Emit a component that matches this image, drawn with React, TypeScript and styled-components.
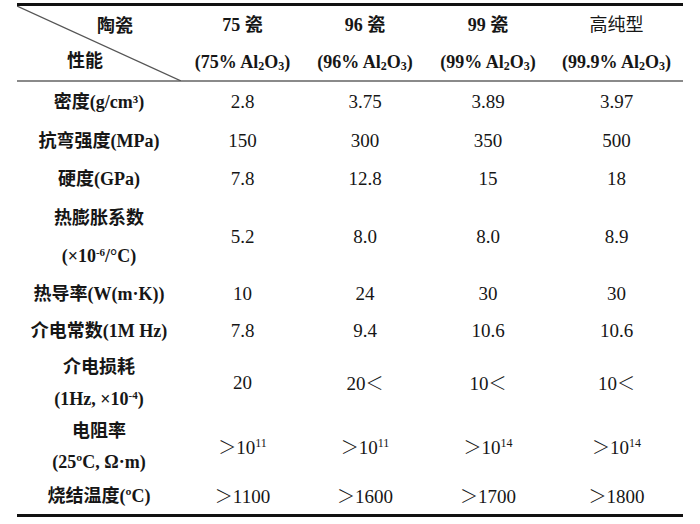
import React from "react";
import styled, { createGlobalStyle } from "styled-components";

const Global = createGlobalStyle`
  html, body { margin: 0; padding: 0; background: #fff; }
  body { font-family: "Liberation Serif", "Noto Sans CJK SC", serif; color: #161616; }
`;

const Page = styled.div`
  padding: 3px 0 0 17px;
  width: 700px;
  box-sizing: border-box;
`;

const Table = styled.table`
  width: 666px;
  border-collapse: collapse;
  table-layout: fixed;
  border-top: 3px solid #111;
  border-bottom: 3px solid #111;
`;

const HeadCell = styled.th<{ $light?: boolean }>`
  height: 37px;
  padding: 0;
  text-align: center;
  vertical-align: middle;
  font-size: 18px;
  line-height: 24px;
  font-weight: ${(p) => (p.$light ? 400 : 700)};
  white-space: nowrap;
  sub { font-size: 12px; vertical-align: -2px; line-height: 0; }
`;

const HeadRow = styled.tr<{ $last?: boolean }>`
  border-bottom: ${(p) => (p.$last ? "2px solid #8a8a8a" : "none")};
`;

const CornerCell = styled.th`
  position: relative;
  padding: 0;
  font-size: 18px;
  font-weight: 700;
  vertical-align: top;
`;

const CornerStack = styled.div`
  display: flex;
  flex-direction: column;
  height: 74px;
`;

const CornerTop = styled.div`
  height: 37px;
  line-height: 40px;
  padding-left: 80px;
  text-align: left;
`;

const CornerBottom = styled.div`
  height: 37px;
  line-height: 36px;
  padding-left: 50px;
  text-align: left;
  font-weight: 600;
`;

const Diagonal = styled.svg`
  position: absolute;
  left: 0;
  top: 0;
  width: 164px;
  height: 75px;
  pointer-events: none;
`;

const LabelCell = styled.td<{ $h: number; $lh: number }>`
  height: ${(p) => p.$h}px;
  padding: 0;
  text-align: center;
  vertical-align: middle;
  font-size: 18px;
  font-weight: 700;
  line-height: ${(p) => p.$lh}px;
  white-space: nowrap;
  sup { font-size: 11px; vertical-align: 6px; line-height: 0; }
`;

const ValueCell = styled.td`
  padding: 0;
  text-align: center;
  vertical-align: middle;
  font-size: 19px;
  line-height: 24px;
  font-weight: 400;
  white-space: nowrap;
  sup { font-size: 12px; vertical-align: 7px; line-height: 0; }
`;

const Gt = styled.span`
  font-family: "Noto Sans CJK SC", sans-serif;
  font-weight: 300;
  font-size: 18px;
`;

type Row = {
  label: React.ReactNode[];
  vals: React.ReactNode[];
  h: number;
  lh: number;
};

const gt = (n: React.ReactNode) => (
  <>
    <Gt>＞</Gt>
    {n}
  </>
);
const lt = (n: string) => (
  <>
    {n}
    <Gt>＜</Gt>
  </>
);
const pow = (b: string, e: string) => (
  <>
    {b}
    <sup>{e}</sup>
  </>
);

const rows: Row[] = [
  { label: ["密度(g/cm³)"], vals: ["2.8", "3.75", "3.89", "3.97"], h: 39, lh: 24 },
  { label: ["抗弯强度(MPa)"], vals: ["150", "300", "350", "500"], h: 39, lh: 24 },
  { label: ["硬度(GPa)"], vals: ["7.8", "12.8", "15", "18"], h: 38, lh: 24 },
  {
    label: ["热膨胀系数", <>(×10<sup>-6</sup>/°C)</>],
    vals: ["5.2", "8.0", "8.0", "8.9"],
    h: 77,
    lh: 38,
  },
  { label: ["热导率(W(m·K))"], vals: ["10", "24", "30", "30"], h: 37, lh: 24 },
  { label: ["介电常数(1M Hz)"], vals: ["7.8", "9.4", "10.6", "10.6"], h: 38, lh: 24 },
  {
    label: ["介电损耗", <>(1Hz, ×10<sup>-4</sup>)</>],
    vals: ["20", lt("20"), lt("10"), lt("10")],
    h: 65,
    lh: 32,
  },
  {
    label: ["电阻率", "(25ºC, Ω·m)"],
    vals: [gt(pow("10", "11")), gt(pow("10", "11")), gt(pow("10", "14")), gt(pow("10", "14"))],
    h: 63,
    lh: 31,
  },
  { label: ["烧结温度(ºC)"], vals: [gt("1100"), gt("1600"), gt("1700"), gt("1800")], h: 36, lh: 24 },
];

const Al = (p: string) => (
  <>
    ({p} Al<sub>2</sub>O<sub>3</sub>)
  </>
);

export default function App() {
  return (
    <Page>
      <Global />
      <Table>
        <colgroup>
          <col style={{ width: 164 }} />
          <col style={{ width: 123 }} />
          <col style={{ width: 122 }} />
          <col style={{ width: 124 }} />
          <col style={{ width: 133 }} />
        </colgroup>
        <thead>
          <HeadRow>
            <CornerCell rowSpan={2}>
              <Diagonal viewBox="0 0 164 75">
                <line x1="0" y1="0" x2="164" y2="75" stroke="#555" strokeWidth="1.2" />
              </Diagonal>
              <CornerStack>
                <CornerTop>陶瓷</CornerTop>
                <CornerBottom>性能</CornerBottom>
              </CornerStack>
            </CornerCell>
            <HeadCell>75 瓷</HeadCell>
            <HeadCell>96 瓷</HeadCell>
            <HeadCell>99 瓷</HeadCell>
            <HeadCell $light>高纯型</HeadCell>
          </HeadRow>
          <HeadRow $last>
            <HeadCell>{Al("75%")}</HeadCell>
            <HeadCell>{Al("96%")}</HeadCell>
            <HeadCell>{Al("99%")}</HeadCell>
            <HeadCell>{Al("99.9%")}</HeadCell>
          </HeadRow>
        </thead>
        <tbody>
          {rows.map((r, i) => (
            <tr key={i}>
              <LabelCell $h={r.h} $lh={r.lh}>
                {r.label.map((l, j) => (
                  <div key={j}>{l}</div>
                ))}
              </LabelCell>
              {r.vals.map((v, j) => (
                <ValueCell key={j}>{v}</ValueCell>
              ))}
            </tr>
          ))}
        </tbody>
      </Table>
    </Page>
  );
}
